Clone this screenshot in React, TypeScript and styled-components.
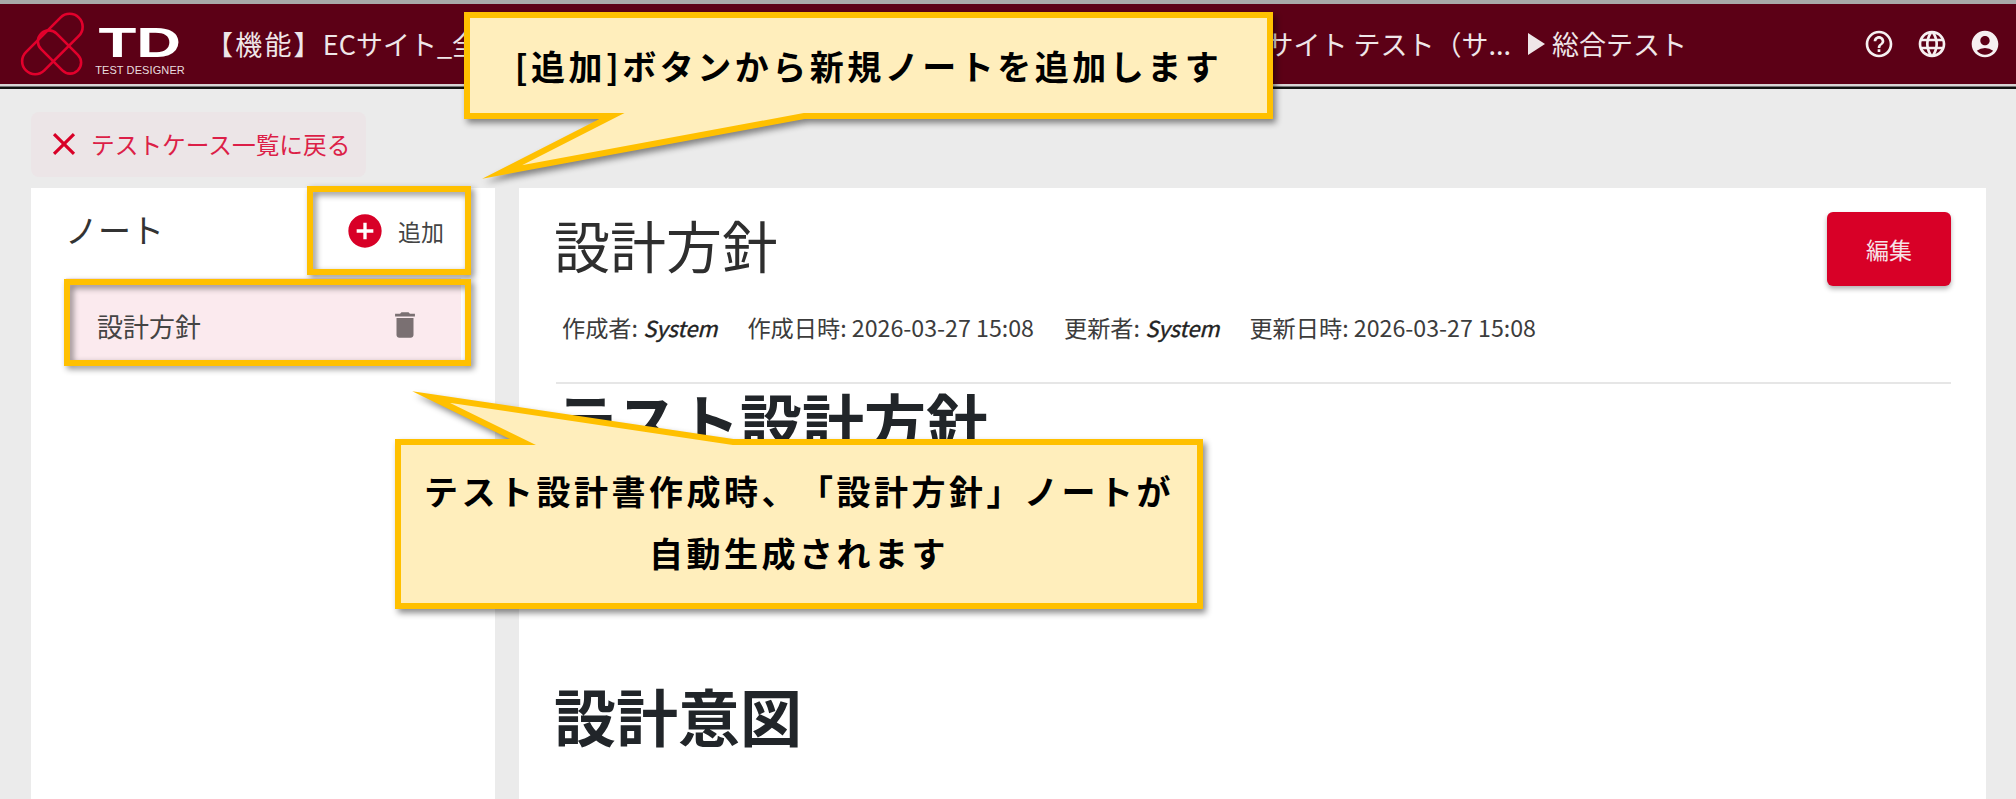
import React from "react";
import styled, { createGlobalStyle } from "styled-components";
import { MdAccountCircle, MdAddCircle, MdClose, MdDelete, MdHelpOutline, MdLanguage } from "react-icons/md";

const FONT = `"Noto Sans CJK JP", "Noto Sans", sans-serif`;
const RED = "#d80027";

const Global = createGlobalStyle`
  html, body { margin: 0; padding: 0; background: #ebebeb; }
  body { font-family: ${FONT}; overflow: hidden; }
  * { box-sizing: border-box; }
`;

const Page = styled.div`
  position: relative;
  width: 2016px;
  height: 799px;
  overflow: hidden;
  display: flex;
  flex-direction: column;
  background: #ebebeb;
`;

const Header = styled.header`
  height: 86px;
  margin-bottom: 3px;
  flex: none;
  display: flex;
  align-items: center;
  padding: 0 15px 0 20px;
  background: #5c0016;
  border-top: 4px solid #a9a9a9;
  border-bottom: 2px solid #d8d4d4;
  box-shadow: 0 1px 0 #777, 0 3px 0 #111;
  color: #efe6e8;
`;

const Logo = styled.svg`
  width: 64px;
  height: 66px;
  flex: none;
  margin-right: 14px;
`;

const Brand = styled.div`
  width: 84px;
  height: 50px;
  margin-top: 14px;
  flex: none;
  display: flex;
  flex-direction: column;
  align-items: center;
  justify-content: space-between;
  margin-right: 24px;
  color: #fff;
`;

const BrandMark = styled.span`
  display: block;
  font: 700 43px/32px "Liberation Sans", sans-serif;
  transform: scaleX(1.44);
`;

const BrandSub = styled.span`
  display: block;
  font: 400 11px/12px "Liberation Sans", sans-serif;
  letter-spacing: 0.1px;
  color: #e8dcdf;
  white-space: nowrap;
`;

const Crumbs = styled.nav`
  flex: 1;
  display: flex;
  align-items: center;
  font-size: 27px;
  line-height: 40px;
  white-space: nowrap;
`;

const CrumbTrail = styled.div`
  width: 1305px;
  display: flex;
  justify-content: space-between;
`;

const CrumbTag = styled.span`
  letter-spacing: 2.2px;
`;

const CrumbArrow = styled.span`
  width: 17px;
  margin: 0 7px 0 17px;
  height: 0;
  border-style: solid;
  border-width: 11px 0 11px 17px;
  border-color: transparent transparent transparent #efe6e8;
`;

const HeaderIcons = styled.div`
  display: flex;
  align-items: center;
  gap: 21px;
  font-size: 32px;
  line-height: 0;
  color: #f6f0f1;
`;

const Content = styled.main`
  flex: 1;
  min-height: 0;
  display: flex;
  flex-direction: column;
  padding: 23px 30px 0 31px;
`;

const BackButton = styled.button`
  width: 335px;
  height: 65px;
  flex: none;
  display: flex;
  align-items: center;
  gap: 8px;
  padding: 0 0 2px 14px;
  border: 0;
  border-radius: 8px;
  background: #ece5e7;
  color: #dc1f48;
  font: 400 23.7px ${FONT};
  svg { font-size: 38px; color: ${RED}; }
`;

const Columns = styled.div`
  flex: 1;
  min-height: 0;
  display: flex;
  gap: 24px;
  margin-top: 11px;
`;

const Sidebar = styled.aside`
  width: 464px;
  flex: none;
  background: #fff;
`;

const SidebarHead = styled.div`
  height: 90px;
  display: flex;
  align-items: center;
  justify-content: space-between;
  padding: 0 51px 4px 34px;
`;

const SidebarTitle = styled.h2`
  margin: 0 0 4px;
  font-size: 33px;
  font-weight: 400;
  color: #333;
`;

const AddButton = styled.button`
  display: flex;
  align-items: center;
  gap: 13px;
  padding: 0;
  border: 0;
  background: none;
  color: #444;
  font: 400 23px ${FONT};
  svg { font-size: 40px; color: ${RED}; }
`;

const NoteItem = styled.div`
  height: 84px;
  margin: 0 34px 0 35px;
  display: flex;
  align-items: center;
  justify-content: space-between;
  padding: 10px 39px 0 31px;
  background: #fbeaee;
  color: #444;
  font-size: 26px;
  svg { font-size: 34px; color: #7a7072; }
`;

const MainCard = styled.section`
  flex: 1;
  min-width: 0;
  background: #fff;
  padding: 24px 35px 0 37px;
`;

const TitleRow = styled.div`
  display: flex;
  align-items: flex-start;
  justify-content: space-between;
`;

const NoteTitle = styled.h1`
  margin: -5px 0 0 -2px;
  font-size: 56px;
  line-height: 74px;
  font-weight: 400;
  color: #2e2e2e;
`;

const EditButton = styled.button`
  width: 124px;
  height: 74px;
  border: 0;
  border-radius: 6px;
  background: ${RED};
  box-shadow: 0 3px 5px rgba(0, 0, 0, 0.3);
  color: #f6e3e7;
  font: 400 23px ${FONT};
`;

const Meta = styled.div`
  display: flex;
  gap: 30px;
  margin: 21px 0 0 6px;
  font-size: 23.2px;
  line-height: 40px;
  color: #3c3c3c;
  white-space: nowrap;
  em {
    font-size: 21.8px;
    font-weight: 400;
    font-style: italic;
    color: #222;
    -webkit-text-stroke: 0.4px #222;
  }
`;

const Divider = styled.hr`
  height: 2px;
  margin: 34px 0 0;
  border: 0;
  background: #e6e6e6;
`;

const Heading = styled.h2<{ $gap: number }>`
  margin: ${(p) => p.$gap}px 0 0 -2px;
  font-size: 62px;
  line-height: 80px;
  font-weight: 700;
  color: #212529;
`;

const Highlight = styled.div<{ $x: number; $y: number; $w: number; $h: number }>`
  position: absolute;
  left: ${(p) => p.$x}px;
  top: ${(p) => p.$y}px;
  width: ${(p) => p.$w}px;
  height: ${(p) => p.$h}px;
  border: 6px solid #ffc000;
  filter: drop-shadow(3px 3px 3px rgba(0, 0, 0, 0.45));
`;

const Callout = styled.div<{ $x: number; $y: number; $w: number; $h: number }>`
  position: absolute;
  left: ${(p) => p.$x}px;
  top: ${(p) => p.$y}px;
  width: ${(p) => p.$w}px;
  height: ${(p) => p.$h}px;
  display: flex;
  align-items: center;
  justify-content: center;
`;

const CalloutShape = styled.svg`
  position: absolute;
  inset: 0;
  width: 100%;
  height: 100%;
  overflow: visible;
  filter: drop-shadow(3px 4px 3px rgba(0, 0, 0, 0.45));
`;

const CalloutText = styled.p<{ $lift?: number }>`
  position: relative;
  margin: 0;
  padding-bottom: ${(p) => p.$lift ?? 0}px;
  font-size: 34px;
  line-height: 62px;
  font-weight: 700;
  letter-spacing: 3.5px;
  text-align: center;
  color: #000;
  white-space: nowrap;
  text-spacing-trim: space-all;
  font-feature-settings: "chws" 0, "palt" 0;
`;

export default function App() {
  return (
    <Page>
      <Global />
      <Header>
        <Logo viewBox="20 12 64 66" fill="none" stroke="#e2002c" strokeWidth="2.6">
          <rect x="15" y="32" width="74.8" height="26" rx="13" transform="rotate(-45 52.4 45)" />
          <rect x="33.5" y="42" width="52" height="22" rx="11" transform="rotate(45 59.5 53)" />
        </Logo>
        <Brand>
          <BrandMark>TD</BrandMark>
          <BrandSub>TEST DESIGNER</BrandSub>
        </Brand>
        <Crumbs>
          <CrumbTrail>
            <span>
              <CrumbTag>【機能】</CrumbTag>ECサイト_全機能テスト
            </span>
            <span>ECサイト テスト（サ...</span>
          </CrumbTrail>
          <CrumbArrow />
          <span>総合テスト</span>
        </Crumbs>
        <HeaderIcons>
          <MdHelpOutline />
          <MdLanguage />
          <MdAccountCircle />
        </HeaderIcons>
      </Header>
      <Content>
        <BackButton>
          <MdClose />
          テストケース一覧に戻る
        </BackButton>
        <Columns>
          <Sidebar>
            <SidebarHead>
              <SidebarTitle>ノート</SidebarTitle>
              <AddButton>
                <MdAddCircle />
                追加
              </AddButton>
            </SidebarHead>
            <NoteItem>
              設計方針
              <MdDelete />
            </NoteItem>
          </Sidebar>
          <MainCard>
            <TitleRow>
              <NoteTitle>設計方針</NoteTitle>
              <EditButton>編集</EditButton>
            </TitleRow>
            <Meta>
              <span>作成者: <em>System</em></span>
              <span>作成日時: 2026-03-27 15:08</span>
              <span>更新者: <em>System</em></span>
              <span>更新日時: 2026-03-27 15:08</span>
            </Meta>
            <Divider />
            <Heading $gap={-4}>テスト設計方針</Heading>
            <Heading $gap={215}>設計意図</Heading>
          </MainCard>
        </Columns>
      </Content>

      <Highlight $x={307} $y={186} $w={164} $h={89} />
      <Highlight $x={64} $y={279} $w={407} $h={87} />

      <Callout $x={464} $y={12} $w={809} $h={107}>
        <CalloutShape viewBox="0 0 809 107">
          <path
            d="M3 3H806V104H340L38 160L148 104H3Z"
            fill="#ffeebc"
            stroke="#ffc000"
            strokeWidth="6"
            strokeMiterlimit="12"
          />
        </CalloutShape>
        <CalloutText>[追加]ボタンから新規ノートを追加します</CalloutText>
      </Callout>

      <Callout $x={395} $y={439} $w={808} $h={170}>
        <CalloutShape viewBox="0 0 808 170">
          <path
            d="M3 3H128L36 -42L338 3H805V167H3Z"
            fill="#ffeebc"
            stroke="#ffc000"
            strokeWidth="6"
            strokeMiterlimit="12"
          />
        </CalloutShape>
        <CalloutText $lift={4}>
          テスト設計書作成時、「設計方針」ノートが
          <br />
          自動生成されます
        </CalloutText>
      </Callout>
    </Page>
  );
}
